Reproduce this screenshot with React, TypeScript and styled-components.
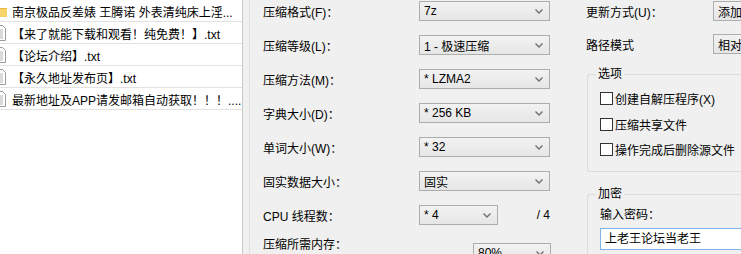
import React from 'react';
import styled, { createGlobalStyle } from 'styled-components';

const GlobalStyle = createGlobalStyle`
  html, body {
    margin: 0;
    padding: 0;
    background: #f0f0f0;
  }
  body {
    font-family: "Liberation Sans", "Noto Sans CJK SC", sans-serif;
    font-size: 12px;
    color: #000;
  }
`;

const Window = styled.div`
  width: 741px;
  height: 254px;
  overflow: hidden;
  display: flex;
  background: #f0f0f0;
`;

const FileList = styled.div`
  width: 242px;
  flex: none;
  background: #fff;
  border-right: 1px solid #c9c9c9;
  overflow: hidden;
`;

const FileRow = styled.div`
  height: 20px;
  border-bottom: 1px solid #e2e2e2;
  display: flex;
  align-items: center;
  gap: 4px;
  padding-top: 1px;
  white-space: nowrap;
`;

const FileIcon = styled.svg`
  flex: none;
  margin-left: -8px;
`;

const Splitter = styled.div`
  width: 6px;
  flex: none;
  border-right: 1px solid #e2e2e2;
`;

const Settings = styled.div`
  width: 323px;
  flex: none;
  padding-left: 13px;
  padding-top: 1px;
`;

const FormRow = styled.div<{ $h: number }>`
  display: grid;
  grid-template-columns: 156px 131px;
  height: ${p => p.$h}px;
  align-items: start;
`;

const Label = styled.div`
  line-height: 20px;
  margin-top: 2px;
  white-space: nowrap;
`;

const SelectBox = styled.div<{ $w?: number; $ml?: number; $mt?: number }>`
  box-sizing: border-box;
  width: ${p => (p.$w ? `${p.$w}px` : '100%')};
  margin-left: ${p => p.$ml ?? 0}px;
  margin-top: ${p => p.$mt ?? 0}px;
  height: 20px;
  border: 1px solid #adadad;
  background: linear-gradient(#f2f2f2, #e6e6e6);
  display: flex;
  align-items: center;
  justify-content: space-between;
  padding: 0 6px 0 4px;
  white-space: nowrap;
  overflow: hidden;
`;

const Chevron = () => (
  <svg width="8" height="5" viewBox="0 0 8 5">
    <path d="M0.5 0.5 L4 4 L7.5 0.5" fill="none" stroke="#707070" strokeWidth="1.4" />
  </svg>
);

const Select = ({ value, w, ml, mt }: { value: string; w?: number; ml?: number; mt?: number }) => (
  <SelectBox $w={w} $ml={ml} $mt={mt}>
    <span>{value}</span>
    <Chevron />
  </SelectBox>
);

const Split = styled.div`
  display: flex;
  justify-content: space-between;
  align-items: center;
  height: 20px;
`;

const RightCol = styled.div`
  flex: none;
  width: 170px;
  padding-top: 1px;
`;

const RightRow = styled.div<{ $h: number }>`
  display: grid;
  grid-template-columns: 127px 1fr;
  height: ${p => p.$h}px;
  align-items: start;
`;

const Group = styled.fieldset<{ $h: number }>`
  margin: 0 0 0 1px;
  padding: 0 0 0 12px;
  border: 1px solid #dcdcdc;
  border-right: none;
  border-radius: 3px 0 0 3px;
  height: ${p => p.$h}px;
  box-sizing: border-box;
`;

const Legend = styled.legend`
  padding: 0 2px;
  margin-left: -4px;
  line-height: 18px;
`;

const CheckRow = styled.label`
  display: flex;
  align-items: center;
  gap: 2px;
  height: 25.5px;
  white-space: nowrap;
`;

const Box = styled.span`
  width: 11px;
  height: 11px;
  border: 1px solid #333;
  background: #fff;
  flex: none;
`;

const GroupBody = styled.div`
  padding-top: 3px;
`;

const PwLabel = styled.div`
  line-height: 20px;
  margin-top: 2px;
`;

const PwInput = styled.div`
  box-sizing: border-box;
  height: 22px;
  margin-top: 3px;
  border: 1px solid #7eb4ea;
  background: #fff;
  padding-left: 4px;
  line-height: 20px;
  white-space: nowrap;
`;

const FolderIcon = () => (
  <FileIcon width="16" height="16" viewBox="0 0 16 16">
    <path d="M1 3h5l1 2h8v9H1z" fill="#e8b93b" />
    <path d="M1 6h14v8H1z" fill="#f6d36b" />
  </FileIcon>
);

const TextIcon = () => (
  <FileIcon width="16" height="16" viewBox="0 0 16 16">
    <path d="M2.5 0.5h8l3 3v12h-11z" fill="#fff" stroke="#9a9a9a" />
    <path d="M4 5h7M4 7h7M4 9h7M4 11h7M4 13h7" stroke="#b5b5b5" />
  </FileIcon>
);

const files = [
  { name: '南京极品反差婊 王腾诺 外表清纯床上淫...', folder: true },
  { name: '【来了就能下载和观看！纯免费！】.txt' },
  { name: '【论坛介绍】.txt' },
  { name: '【永久地址发布页】.txt' },
  { name: '最新地址及APP请发邮箱自动获取！！！....' },
];

const settings = [
  { label: '压缩格式(F)：', value: '7z' },
  { label: '压缩等级(L)：', value: '1 - 极速压缩' },
  { label: '压缩方法(M)：', value: '* LZMA2' },
  { label: '字典大小(D)：', value: '* 256 KB' },
  { label: '单词大小(W)：', value: '* 32' },
  { label: '固实数据大小：', value: '固实' },
];

const options = ['创建自解压程序(X)', '压缩共享文件', '操作完成后删除源文件'];

export default function App() {
  return (
    <>
      <GlobalStyle />
      <Window>
        <FileList>
          {files.map(f => (
            <FileRow key={f.name}>
              {f.folder ? <FolderIcon /> : <TextIcon />}
              <span>{f.name}</span>
            </FileRow>
          ))}
        </FileList>
        <Splitter />
        <Settings>
          {settings.map(s => (
            <FormRow key={s.label} $h={34}>
              <Label>{s.label}</Label>
              <Select value={s.value} />
            </FormRow>
          ))}
          <FormRow $h={28}>
            <Label>CPU 线程数：</Label>
            <Split>
              <Select value="* 4" w={79} />
              <span>/ 4</span>
            </Split>
          </FormRow>
          <FormRow $h={30}>
            <Label>压缩所需内存：</Label>
            <Select value="80%" w={78} ml={54} mt={10} />
          </FormRow>
        </Settings>
        <RightCol>
          <RightRow $h={33}>
            <Label>更新方式(U)：</Label>
            <Select value="添加" />
          </RightRow>
          <RightRow $h={31}>
            <Label>路径模式</Label>
            <Select value="相对" />
          </RightRow>
          <Group $h={107}>
            <Legend>选项</Legend>
            <GroupBody>
              {options.map(o => (
                <CheckRow key={o}>
                  <Box />
                  <span>{o}</span>
                </CheckRow>
              ))}
            </GroupBody>
          </Group>
          <Group $h={80} style={{ marginTop: 13 }}>
            <Legend>加密</Legend>
            <PwLabel>输入密码：</PwLabel>
            <PwInput>上老王论坛当老王</PwInput>
          </Group>
        </RightCol>
      </Window>
    </>
  );
}
